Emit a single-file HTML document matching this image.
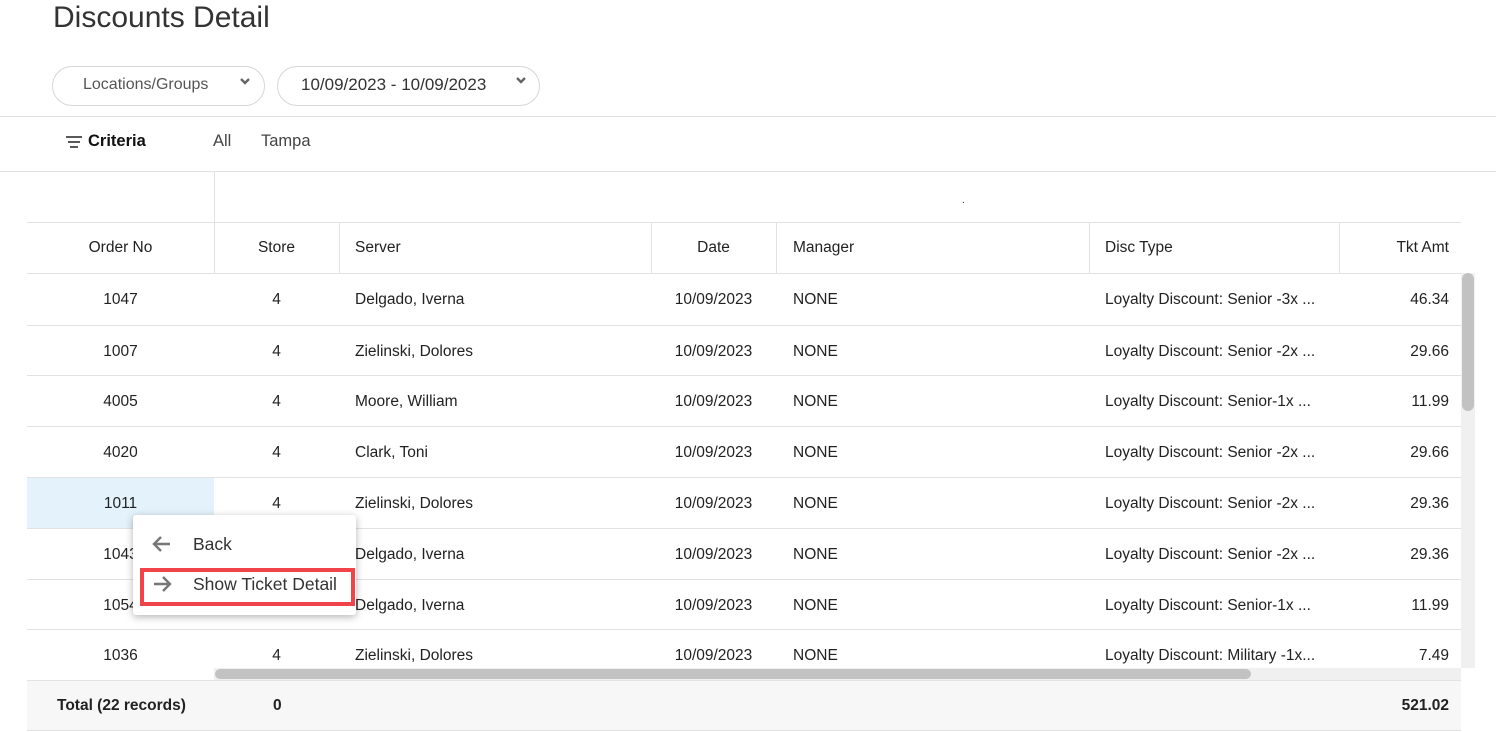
<!DOCTYPE html>
<html><head><style>
*{margin:0;padding:0;box-sizing:border-box}
body{width:1496px;height:732px;overflow:hidden;background:#fff;font-family:"Liberation Sans",sans-serif;color:#222;position:relative}
.a{position:absolute}
.t{font-size:15.5px;white-space:nowrap}
.hl{position:absolute;height:1px;background:#e2e2e2}
.vl{position:absolute;width:1px;background:#e2e2e2}
.pill{position:absolute;border:1px solid #d6d6d6;border-radius:20px;height:40px;top:66px;font-size:16px;color:#555;line-height:36px}
</style></head><body>
<div class="a" style="left:53px;top:1px;font-size:30px;color:#333">Discounts Detail</div>
<div class="pill" style="left:52px;width:213px"><span style="position:absolute;left:30px">Locations/Groups</span><svg class="a" style="left:186px;top:10px" width="12" height="10"><path d="M2 2l4 4 4-4" stroke="#666" stroke-width="2.4" fill="none"/></svg></div>
<div class="pill" style="left:277px;width:263px;color:#333;font-size:17px"><span style="position:absolute;left:23px">10/09/2023 - 10/09/2023</span><svg class="a" style="left:237px;top:9px" width="12" height="10"><path d="M2 2l4 4 4-4" stroke="#666" stroke-width="2.4" fill="none"/></svg></div>
<div class="hl" style="left:0;width:1496px;top:116px"></div>
<svg class="a" style="left:65px;top:135px" width="18" height="14"><path d="M1 2h16M3 7h12M5 12h8" stroke="#222" stroke-width="1.6"/></svg>
<div class="a" style="left:88px;top:132px;font-size:16.5px;font-weight:bold;color:#111">Criteria</div>
<div class="a" style="left:213px;top:132px;font-size:16.5px;color:#444">All</div>
<div class="a" style="left:261px;top:132px;font-size:16.5px;color:#444">Tampa</div>
<div class="hl" style="left:0;width:1496px;top:171px"></div>
<div class="vl" style="left:214px;top:172px;height:50px"></div>
<div class="a" style="left:962px;top:195px;font-size:10px">.</div>
<div class="hl" style="left:27px;width:1434px;top:222px"></div>
<div class="hl" style="left:27px;width:1434px;top:273px"></div>
<div class="a" style="left:27px;top:478px;width:187px;height:50px;background:#e3f2fb"></div>
<div id="cols"></div>
<div class="a" style="left:1461px;top:273px;width:14px;height:395px;background:#f0f0f0"></div>
<div class="a" style="left:1462px;top:273px;width:12px;height:138px;background:#c2c2c2;border-radius:6px"></div>
<div class="a" style="left:214px;top:668px;width:1247px;height:12px;background:#f0f0f0"></div>
<div class="a" style="left:215px;top:669px;width:1036px;height:10px;background:#c2c2c2;border-radius:5px"></div>
<div class="a" style="left:27px;top:680px;width:1434px;height:51px;background:#f7f7f7;border-top:1px solid #e2e2e2;border-bottom:1px solid #e2e2e2"></div>
<div class="a t" style="left:57px;top:697px;font-weight:bold">Total (22 records)</div>
<div class="a t" style="left:273px;top:697px;font-weight:bold">0</div>
<div class="a t" style="left:1339px;width:110px;text-align:right;top:697px;font-weight:bold">521.02</div>
<script>
var h='';
var vx=[214,339,651,776,1089,1339];
vx.forEach(function(x){h+='<div class="vl" style="left:'+x+'px;top:222px;height:51px"></div>'});
function c(x,w,al,txt,y){return '<div class="a t" style="left:'+x+'px;width:'+w+'px;text-align:'+al+';top:'+y+'px">'+txt+'</div>';}
var hy=239;
h+=c(27,187,'center','Order No',hy)+c(214,125,'center','Store',hy)+c(355,200,'left','Server',hy)+c(651,125,'center','Date',hy)+c(793,200,'left','Manager',hy)+c(1105,200,'left','Disc Type',hy)+c(1339,110,'right','Tkt Amt',hy);
var rows=[['1047','Delgado, Iverna','Loyalty Discount: Senior -3x ...','46.34'],['1007','Zielinski, Dolores','Loyalty Discount: Senior -2x ...','29.66'],['4005','Moore, William','Loyalty Discount: Senior-1x ...','11.99'],['4020','Clark, Toni','Loyalty Discount: Senior -2x ...','29.66'],['1011','Zielinski, Dolores','Loyalty Discount: Senior -2x ...','29.36'],['1043','Delgado, Iverna','Loyalty Discount: Senior -2x ...','29.36'],['1054','Delgado, Iverna','Loyalty Discount: Senior-1x ...','11.99'],['1036','Zielinski, Dolores','Loyalty Discount: Military -1x...','7.49']];
var ys=[273,325,375,426,477,528,579,629];
rows.forEach(function(r,i){var y=ys[i]+18;
h+=c(27,187,'center',r[0],y)+c(214,125,'center','4',y)+c(355,290,'left',r[1],y)+c(651,125,'center','10/09/2023',y)+c(793,200,'left','NONE',y)+c(1105,230,'left',r[2],y)+c(1339,110,'right',r[3],y);
if(i>0)h+='<div class="hl" style="left:27px;width:1434px;top:'+ys[i]+'px"></div>';});
document.getElementById('cols').innerHTML=h;
</script>
<div class="a" style="left:133px;top:515px;width:223px;height:100px;background:#fff;border-radius:3px;box-shadow:0 2px 8px rgba(0,0,0,.3)"></div>
<svg class="a" style="left:152px;top:535px" width="20" height="18"><path d="M18 9H3M9 2L2 9l7 7" stroke="#777" stroke-width="2.4" fill="none"/></svg>
<div class="a" style="left:193px;top:534px;font-size:17.5px;color:#333">Back</div>
<div class="a" style="left:140px;top:568px;width:215px;height:38px;border:4px solid #f0434a"></div>
<svg class="a" style="left:152px;top:575px" width="20" height="18"><path d="M2 9h15M11 2l7 7-7 7" stroke="#777" stroke-width="2.4" fill="none"/></svg>
<div class="a" style="left:193px;top:574px;font-size:17.5px;color:#333">Show Ticket Detail</div>
</body></html>
